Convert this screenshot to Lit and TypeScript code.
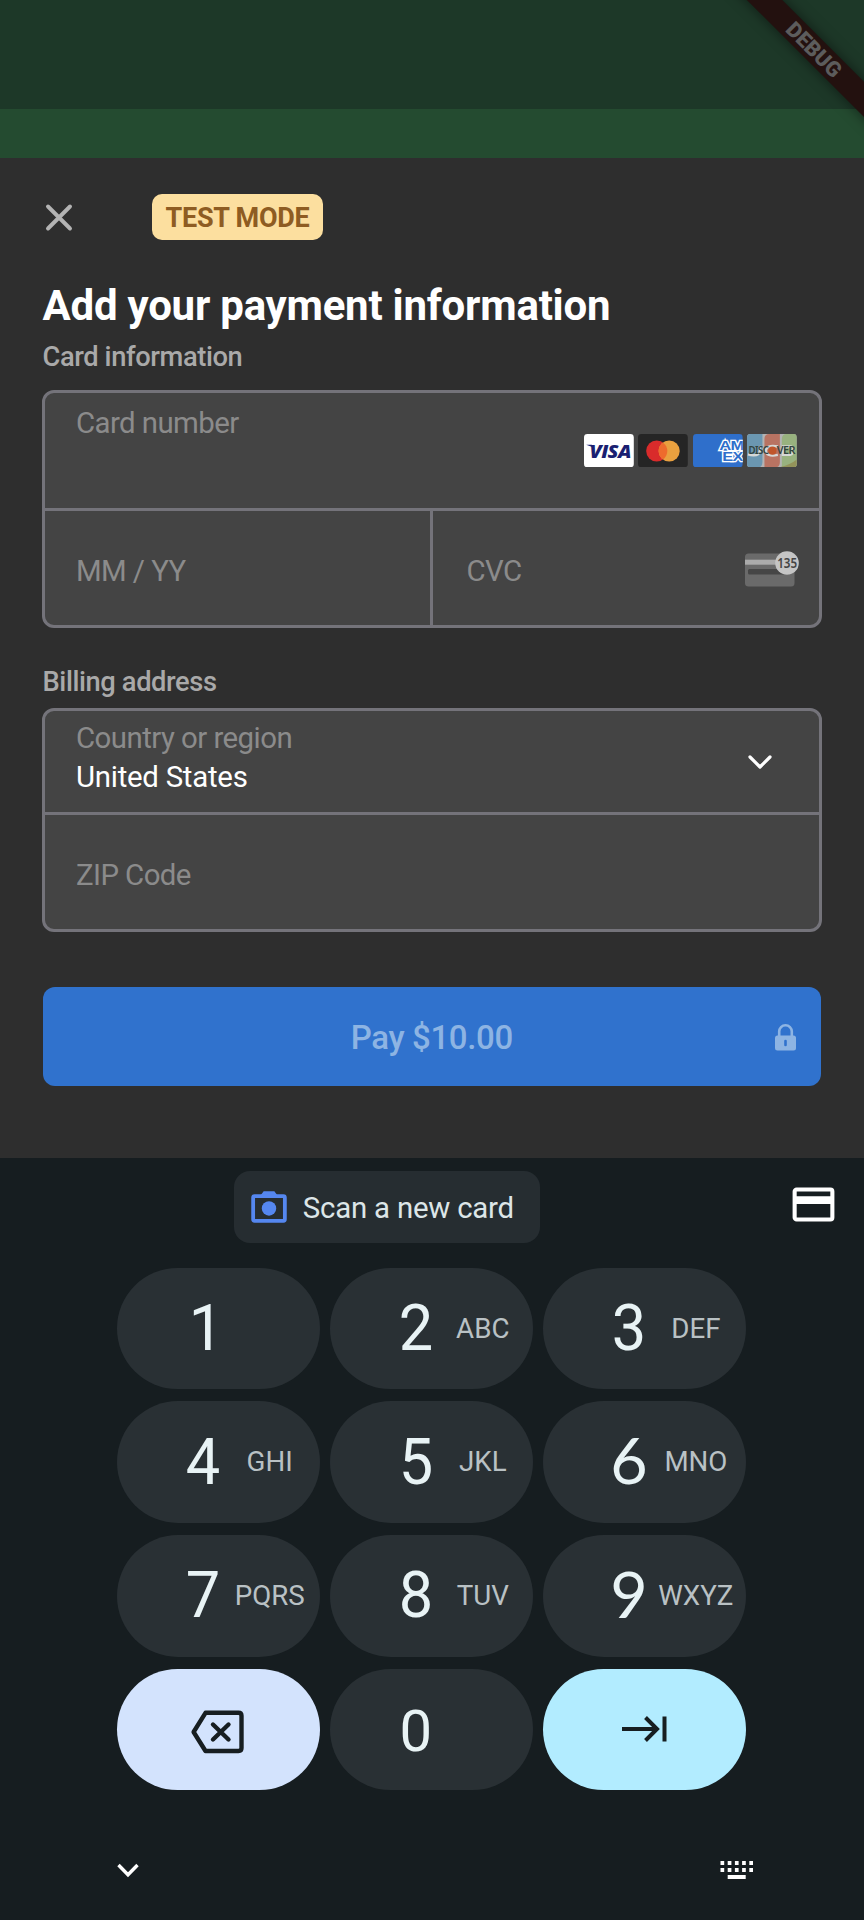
import { LitElement, html, css, svg, nothing } from "lit";
import { customElement, property } from "lit/decorators.js";

@customElement("card-brands")
class CardBrands extends LitElement {
  static styles = css`
    :host { display: flex; gap: 4.6px; }
    svg { display: block; width: 49.8px; height: 33.4px; }
  `;
  render() {
    return html`
      <svg viewBox="0 0 50 33.5">
        <rect width="50" height="33.5" rx="3.5" fill="#fff" />
        <path d="M2.2 10.8h5.6l2 3.4-2.2-1.5z" fill="#1a1f71" />
        <text x="5.5" y="24" font-family="Open Sans" font-size="18.5" font-weight="800" font-style="italic"
          fill="#1a1f71" textLength="41.5" lengthAdjust="spacingAndGlyphs">VISA</text>
      </svg>
      <svg viewBox="0 0 50 33.5">
        <rect width="50" height="33.5" rx="3.5" fill="#252525" />
        <circle cx="18.8" cy="17" r="10.6" fill="#d92b2b" />
        <circle cx="31.3" cy="17" r="10.6" fill="#e9a03f" />
        <path d="M25.05 8.4a10.6 10.6 0 0 1 0 17.2a10.6 10.6 0 0 1 0-17.2z" fill="#ee6b2d" />
      </svg>
      <svg viewBox="0 0 50 33.5">
        <defs><clipPath id="a"><rect width="50" height="33.5" rx="3.5" /></clipPath></defs>
        <g clip-path="url(#a)">
          <rect width="50" height="33.5" fill="#2f6fcb" />
          <g font-family="Liberation Sans" font-weight="700" font-size="13.5" fill="#2f6fcb" stroke="#fff"
            stroke-width="2.4" paint-order="stroke">
            <text x="26.4" y="16" textLength="24.5" lengthAdjust="spacingAndGlyphs">AM</text>
            <text x="29.4" y="27.5" textLength="20.5" lengthAdjust="spacingAndGlyphs">EX</text>
          </g>
        </g>
      </svg>
      <svg viewBox="0 0 50 33.5">
        <defs><clipPath id="d"><rect width="50" height="33.5" rx="3.5" /></clipPath></defs>
        <g clip-path="url(#d)">
          <rect width="50" height="33.5" fill="#b3b3b3" />
          <path d="M0 0h15.5v28q0 5.500-5 5.500H0z" fill="#6b97b1" />
          <path d="M17.500 33.500V5q0-5 5-5H33v28q0 5.500-5 5.500z" fill="#b87362" />
          <path d="M35 33.500V5q0-5 5-5H50v33.500z" fill="#98b27f" />
          <path d="M32 33.500Q43 31 50 25.500v8z" fill="#93935a" />
          <g fill="none" stroke="#d6d8d6" stroke-width="2.400">
            <path d="M1 20.500q7 2 10.500-.5q2-2 1.500-8" /><path d="M31 12.500q-12-2-12 4.300t12 4.200" />
            <path d="M36 12.500v8.500h7q4-1 2-4q3-3-1-4.500z" />
          </g>
          <circle cx="25.500" cy="16.700" r="4.100" fill="#c0562b" />
          <text x="1.500" y="20" font-family="Noto Sans" font-size="10" font-weight="600" fill="#33443f"
            textLength="20" lengthAdjust="spacingAndGlyphs">DISC</text>
          <text x="30" y="20" font-family="Noto Sans" font-size="10" font-weight="600" fill="#33443f"
            textLength="18" lengthAdjust="spacingAndGlyphs">VER</text>
        </g>
      </svg>
    `;
  }
}

@customElement("pad-key")
class PadKey extends LitElement {
  @property() digit = "";
  @property() letters = "";
  @property() tone = "";
  static styles = css`
    :host { display: block; }
    .key {
      box-sizing: border-box; height: 121.7px; border-radius: 61px; background: #293034;
      display: grid; grid-template-columns: 50px 84px; padding-left: 61px; align-items: center;
    }
    .digit {
      font: 400 64.500px/70px Roboto, sans-serif; color: #e8f3f5; text-align: center; transform: scaleX(.95);
      padding-bottom: 1px;
    }
    .straight { font-family: Lato, Roboto, sans-serif; transform: none; padding-bottom: 6px; }
    .one { padding-left: 6px; }
    .zero { font-size: 58px; transform: none; padding: 2px 0 0; }
    .letters { font: 400 27.700px/30px Roboto, sans-serif; color: #b9c1c4; text-align: center; }
    .action { display: flex; justify-content: center; padding: 0; }
    .erase { background: #d3e3fd; padding: 1px 1px 0 0; }
    .next { background: #b2ecff; }
  `;
  render() {
    if (this.tone) return html`<div class="key action ${this.tone}"><slot></slot></div>`;
    const faces: Record<string, string> = { "0": "zero", "1": "one", "6": "straight", "9": "straight" };
    return html`<div class="key">
      <span class="digit ${faces[this.digit] ?? ""}">${this.digit}</span>
      ${this.letters ? html`<span class="letters">${this.letters}</span>` : nothing}
    </div>`;
  }
}

const KEYS = [
  ["1", ""], ["2", "ABC"], ["3", "DEF"],
  ["4", "GHI"], ["5", "JKL"], ["6", "MNO"],
  ["7", "PQRS"], ["8", "TUV"], ["9", "WXYZ"],
];

@customElement("app-root")
class AppRoot extends LitElement {
  static styles = css`
    :host {
      display: block; position: relative; width: 864px; height: 1920px; overflow: hidden;
      font-family: Roboto, sans-serif; background: #161d20;
    }
    svg { display: block; overflow: visible; }
    .status { height: 109px; background: #1d3828; }
    .appbar { height: 48.500px; background: #244b30; }
    .banner {
      position: absolute; left: 714px; top: 37px; width: 200px; height: 25.300px;
      transform: rotate(45deg); background: #23110f; box-shadow: 0 0 13px rgba(0, 0, 0, .5);
      text-align: center; font: 900 21.400px/25.300px Roboto, sans-serif; color: #5c5c5c;
    }
    .sheet { box-sizing: border-box; height: 1000.500px; background: #2e2e2e; padding: 36.200px 43px 0 42.500px; }
    .top { display: flex; align-items: center; height: 46px; gap: 80px; padding-left: 3.500px; }
    .badge {
      box-sizing: border-box; width: 171px; height: 46px; border-radius: 10px; background: #fcdf9f;
      color: #8e5c22; font-weight: 700; font-size: 27px; line-height: 48.500px; text-align: center;
      letter-spacing: -.25px;
    }
    h1 { margin: 39.500px 0 0; font-size: 42px; line-height: 54px; font-weight: 700; color: #fff; letter-spacing: -.23px; }
    h2 { margin: 0; font-size: 27.300px; line-height: 32px; font-weight: 500; color: #a9a9a9; letter-spacing: -.4px; }
    .card-title { margin-top: 8px; }
    .bill-title { margin-top: 38px; }
    .box {
      box-sizing: border-box; border: 3px solid #74737a; border-radius: 12px; background: #444;
      margin-left: -.5px; margin-right: -.5px;
      font-size: 29.400px; line-height: 34px; color: #8b8b8b; overflow: hidden; letter-spacing: -.58px;
    }
    .card { height: 238px; margin-top: 16.800px; display: grid; grid-template-rows: 118px 1fr; }
    .number { display: flex; justify-content: space-between; padding: 13px 21.500px 0 31px; border-bottom: 3px solid #74737a; }
    .number card-brands { margin-top: 28px; }
    .pair { display: grid; grid-template-columns: 385px 1fr; }
    .pair > div { display: flex; align-items: center; padding: 5.500px 20px 0 31px; }
    .pair > .cvc { border-left: 3px solid #74737a; justify-content: space-between; padding: 5.500px 19.500px 0 33.500px; }
    .cvc svg { margin-top: -2.500px; }
    .address { height: 224px; margin-top: 9.800px; display: grid; grid-template-rows: 104.500px 1fr; }
    .country {
      display: flex; justify-content: space-between; align-items: center; padding: 0 46.500px 0 31px;
      border-bottom: 3px solid #74737a;
    }
    .lines { display: grid; row-gap: 5px; margin-top: -8px; letter-spacing: -.54px; }
    .value { color: #fff; letter-spacing: -.26px; }
    .zip { display: flex; align-items: center; padding: 6px 31px 0; }
    .pay {
      display: grid; grid-template-columns: 1fr auto 1fr; align-items: center; height: 99.500px; margin-top: 55px;
      border-radius: 12px; background: #3072cd; color: #8db4e3; font-size: 33px; font-weight: 500;
      letter-spacing: -.36px;
    }
    .pay span { grid-column: 2; padding-top: 1px; }
    .pay svg { justify-self: end; margin: 1px 25px 0 0; }
    .keyboard { display: flex; flex-direction: column; height: 762px; background: #161d20; }
    .strip { display: flex; justify-content: space-between; padding: 12.700px 29px 0 234.300px; }
    .chip {
      display: flex; align-items: center; gap: 16px; box-sizing: border-box; width: 305.700px; height: 72.300px;
      padding-left: 16.500px; border-radius: 16px; background: #262d31; color: #dde6e8; font-size: 29.400px;
      letter-spacing: -.22px;
    }
    .chip span { padding-top: 3px; }
    .strip > svg { margin-top: 16.800px; }
    .pad { display: grid; grid-template-columns: repeat(3, 203.600px); gap: 12px 9.500px; padding: 24.700px 0 0 116.700px; }
    .foot { display: flex; justify-content: space-between; padding: 69.500px 110.500px 0 116px; }
    .foot svg + svg { margin-top: -2px; }
    .tab { margin: -1px 0 0; }
  `;
  render() {
    return html`
      <div class="status"></div>
      <div class="appbar"></div>
      <main class="sheet">
        <div class="top">
          <svg width="26" height="26" viewBox="0 0 26 26" stroke="#b3b3b3" stroke-width="3.900" stroke-linecap="round">
            <path d="M2 2.500l22 22M24 2.500L2 24.500" />
          </svg>
          <span class="badge">TEST MODE</span>
        </div>
        <h1>Add your payment information</h1>
        <h2 class="card-title">Card information</h2>
        <section class="box card">
          <div class="number"><span>Card number</span><card-brands></card-brands></div>
          <div class="pair">
            <div>MM / YY</div>
            <div class="cvc">
              <span>CVC</span>
              <svg width="54" height="36" viewBox="0 0 54 36">
                <rect x="0" y="2.500" width="49.500" height="33" rx="3.500" fill="#6a6a6a" />
                <rect x="0" y="8.700" width="49.500" height="5" fill="#ababab" />
                <rect x="3" y="18" width="42" height="5.500" rx="1.500" fill="#464646" />
                <circle cx="42" cy="12" r="11.800" fill="#c5c5c5" />
                <text x="32.200" y="17.200" font-family="Noto Sans" font-size="14.500" font-weight="600" fill="#444"
                  letter-spacing="0" textLength="20" lengthAdjust="spacingAndGlyphs">135</text>
              </svg>
            </div>
          </div>
        </section>
        <h2 class="bill-title">Billing address</h2>
        <section class="box address">
          <div class="country">
            <div class="lines"><span>Country or region</span><span class="value">United States</span></div>
            <svg width="24" height="15" viewBox="0 0 24 15" fill="none" stroke="#fff" stroke-width="3.200"
              stroke-linecap="round" stroke-linejoin="round"><path d="M2 3l10 10 10-10" /></svg>
          </div>
          <div class="zip">ZIP Code</div>
        </section>
        <div class="pay">
          <span>Pay $10.00</span>
          <svg width="21" height="27" viewBox="0 0 21 27">
            <path d="M4.200 13V7.500a6.300 6.300 0 0 1 12.600 0V13" fill="none" stroke="#8db4e3" stroke-width="2.600" />
            <rect y="11.500" width="21" height="15" rx="2.500" fill="#8db4e3" />
            <rect x="9.200" y="15.800" width="2.600" height="6.400" rx="1.300" fill="#3072cd" />
          </svg>
        </div>
      </main>
      <section class="keyboard">
        <div class="strip">
          <div class="chip">
            <svg width="36" height="33" viewBox="0 0 37 33">
              <path d="M10 5L13 .8h11L27 5z" fill="#5587f0" />
              <rect x="2.200" y="5.800" width="32.600" height="25.400" rx="1.500" fill="none" stroke="#5587f0" stroke-width="3.900" />
              <circle cx="18.500" cy="18.500" r="7.400" fill="#5587f0" />
            </svg>
            <span>Scan a new card</span>
          </div>
          <svg width="43" height="35" viewBox="0 0 44 36">
            <rect x="2.600" y="2.600" width="38.800" height="30.800" rx="2" fill="none" stroke="#fff" stroke-width="4.200" />
            <path d="M2 9.500h40v8H2z" fill="#fff" />
          </svg>
        </div>
        <div class="pad">
          ${KEYS.map(([d, l]) => html`<pad-key digit=${d} letters=${l}></pad-key>`)}
          <pad-key tone="erase">
            <svg width="53" height="47" viewBox="0 -2 53 47" fill="none" stroke="#171e21" stroke-width="4.400" stroke-linejoin="round">
              <path d="M14.500 3.800H47.500q3 0 3 3V39q0 3-3 3H14.500L2.600 23z" />
              <path d="M22 15.500l15.500 15M37.500 15.500L22 30.500" stroke-linecap="round" />
            </svg>
          </pad-key>
          <pad-key digit="0"></pad-key>
          <pad-key tone="next">
            <svg class="tab" width="45" height="26" viewBox="0 0 45 26" fill="none" stroke="#171e21" stroke-width="4">
              <path d="M0 13h36M23.500 1.500L35 13 23.500 24.500M42.500 .5v25" />
            </svg>
          </pad-key>
        </div>
        <div class="foot">
          <svg width="24" height="24" viewBox="0 0 24 24" fill="none" stroke="#fff" stroke-width="3.400"><path d="M2.500 5L12 14.700 21.500 5" /></svg>
          <svg width="34" height="24" viewBox="0 0 34 24" fill="#fff">
            ${[0, 7.2, 14.4, 21.6, 28.8].map((x) => svg`<rect x=${x + 0.5} y="3" width="3.700" height="4" /><rect x=${x + 0.5} y="10" width="3.700" height="4" />`)}
            <rect x="7.700" y="17" width="18" height="4" />
          </svg>
        </div>
      </section>
      <div class="banner">DEBUG</div>
    `;
  }
}
